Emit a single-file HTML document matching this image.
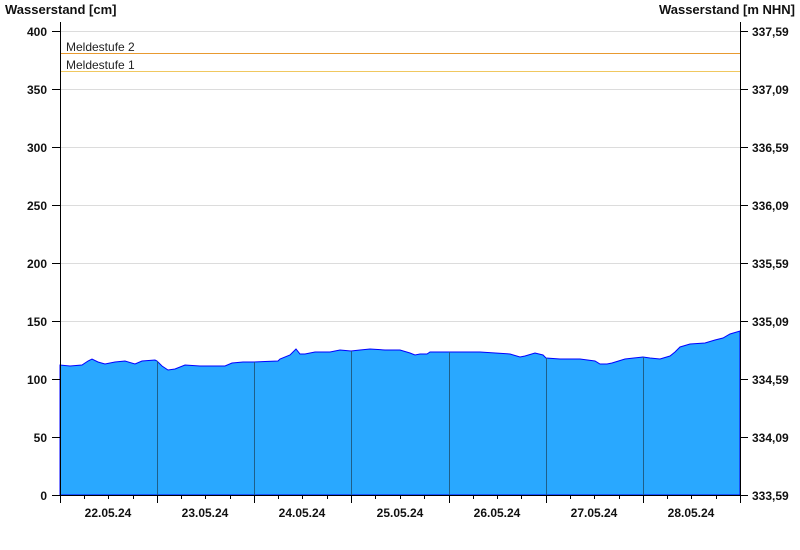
<!DOCTYPE html>
<html><head><meta charset="utf-8"><style>
html,body{margin:0;padding:0;background:#fff;}
svg{display:block;font-family:"Liberation Sans",Arial,sans-serif;}
.b{font-weight:bold;font-size:12px;fill:#111;}
</style></head><body>
<svg width="800" height="550" viewBox="0 0 800 550">
<text x="5" y="14" class="b" style="font-size:13px">Wasserstand [cm]</text>
<text x="795" y="14" class="b" style="font-size:13px" text-anchor="end">Wasserstand [m NHN]</text>
<g stroke="#dcdcdc" stroke-width="1">
<line x1="60" x2="740" y1="31.5" y2="31.5"/>
<line x1="60" x2="740" y1="89.5" y2="89.5"/>
<line x1="60" x2="740" y1="147.5" y2="147.5"/>
<line x1="60" x2="740" y1="205.5" y2="205.5"/>
<line x1="60" x2="740" y1="263.5" y2="263.5"/>
<line x1="60" x2="740" y1="321.5" y2="321.5"/>
<line x1="60" x2="740" y1="379.5" y2="379.5"/>
<line x1="60" x2="740" y1="437.5" y2="437.5"/>
</g>
<line x1="60" x2="740" y1="53.5" y2="53.5" stroke="#e89a30"/>
<line x1="60" x2="740" y1="71.5" y2="71.5" stroke="#f0c860"/>
<text x="66" y="51" font-size="12" fill="#222">Meldestufe 2</text>
<text x="66" y="69" font-size="12" fill="#222">Meldestufe 1</text>
<path fill="#29a8ff" stroke="#0000ff" stroke-width="1" d="M60,495 L60,365 L70,366 L82,365 L88,361 L92,359 L98,362 L105,364 L115,362 L125,361 L135,364 L142,361 L155,360 L157,361 L162,366 L168,370 L175,369 L185,365 L200,366 L225,366 L232,363 L243,362 L254,362 L265,361.5 L278,361 L280,359 L290,355 L296,349 L300,354 L305,354 L315,352 L330,352 L340,350 L351,351 L360,350 L370,349 L385,350 L400,350 L410,353 L415,355 L420,354 L427,354 L430,352 L440,352 L449,352 L480,352 L510,354 L520,357 L525,356 L535,353 L543,355 L546,358 L560,359 L580,359 L595,361 L600,364 L607,364 L612,363 L625,359 L643,357 L650,358 L660,359 L670,356 L675,352 L680,347 L690,344 L705,343 L715,340 L723,338 L730,334 L740,331 L740,495 Z"/>
<g stroke="#1e5f8a" stroke-width="1">
<line x1="157.5" x2="157.5" y1="361" y2="495"/>
<line x1="254.5" x2="254.5" y1="362" y2="495"/>
<line x1="351.5" x2="351.5" y1="351" y2="495"/>
<line x1="449.5" x2="449.5" y1="352" y2="495"/>
<line x1="546.5" x2="546.5" y1="358" y2="495"/>
<line x1="643.5" x2="643.5" y1="357" y2="495"/>
</g>
<g stroke="#000" stroke-width="1">
<line x1="60.5" x2="60.5" y1="22" y2="503"/>
<line x1="740.5" x2="740.5" y1="22" y2="495"/>
<line x1="52" x2="748" y1="495.5" y2="495.5"/>
<line x1="52" x2="60" y1="31.5" y2="31.5"/><line x1="52" x2="60" y1="89.5" y2="89.5"/>
<line x1="52" x2="60" y1="147.5" y2="147.5"/><line x1="52" x2="60" y1="205.5" y2="205.5"/>
<line x1="52" x2="60" y1="263.5" y2="263.5"/><line x1="52" x2="60" y1="321.5" y2="321.5"/>
<line x1="52" x2="60" y1="379.5" y2="379.5"/><line x1="52" x2="60" y1="437.5" y2="437.5"/>
<line x1="740" x2="748" y1="31.5" y2="31.5"/><line x1="740" x2="748" y1="89.5" y2="89.5"/>
<line x1="740" x2="748" y1="147.5" y2="147.5"/><line x1="740" x2="748" y1="205.5" y2="205.5"/>
<line x1="740" x2="748" y1="263.5" y2="263.5"/><line x1="740" x2="748" y1="321.5" y2="321.5"/>
<line x1="740" x2="748" y1="379.5" y2="379.5"/><line x1="740" x2="748" y1="437.5" y2="437.5"/>
<line x1="157.5" x2="157.5" y1="495" y2="503"/><line x1="254.5" x2="254.5" y1="495" y2="503"/>
<line x1="351.5" x2="351.5" y1="495" y2="503"/><line x1="449.5" x2="449.5" y1="495" y2="503"/>
<line x1="546.5" x2="546.5" y1="495" y2="503"/><line x1="643.5" x2="643.5" y1="495" y2="503"/>
<line x1="740.5" x2="740.5" y1="495" y2="503"/>
<line x1="84.5" x2="84.5" y1="495" y2="499"/><line x1="108.5" x2="108.5" y1="495" y2="499"/><line x1="133.5" x2="133.5" y1="495" y2="499"/>
<line x1="181.5" x2="181.5" y1="495" y2="499"/><line x1="205.5" x2="205.5" y1="495" y2="499"/><line x1="230.5" x2="230.5" y1="495" y2="499"/>
<line x1="278.5" x2="278.5" y1="495" y2="499"/><line x1="302.5" x2="302.5" y1="495" y2="499"/><line x1="327.5" x2="327.5" y1="495" y2="499"/>
<line x1="375.5" x2="375.5" y1="495" y2="499"/><line x1="400.5" x2="400.5" y1="495" y2="499"/><line x1="424.5" x2="424.5" y1="495" y2="499"/>
<line x1="473.5" x2="473.5" y1="495" y2="499"/><line x1="497.5" x2="497.5" y1="495" y2="499"/><line x1="521.5" x2="521.5" y1="495" y2="499"/>
<line x1="570.5" x2="570.5" y1="495" y2="499"/><line x1="594.5" x2="594.5" y1="495" y2="499"/><line x1="619.5" x2="619.5" y1="495" y2="499"/>
<line x1="667.5" x2="667.5" y1="495" y2="499"/><line x1="691.5" x2="691.5" y1="495" y2="499"/><line x1="716.5" x2="716.5" y1="495" y2="499"/>
</g>
<g class="b" text-anchor="end">
<text x="47" y="36">400</text><text x="47" y="94">350</text><text x="47" y="152">300</text>
<text x="47" y="210">250</text><text x="47" y="268">200</text><text x="47" y="326">150</text>
<text x="47" y="384">100</text><text x="47" y="442">50</text><text x="47" y="500">0</text>
</g>
<g class="b">
<text x="752" y="36">337,59</text><text x="752" y="94">337,09</text><text x="752" y="152">336,59</text>
<text x="752" y="210">336,09</text><text x="752" y="268">335,59</text><text x="752" y="326">335,09</text>
<text x="752" y="384">334,59</text><text x="752" y="442">334,09</text><text x="752" y="500">333,59</text>
</g>
<g class="b" text-anchor="middle">
<text x="108" y="517">22.05.24</text><text x="205" y="517">23.05.24</text><text x="302" y="517">24.05.24</text>
<text x="400" y="517">25.05.24</text><text x="497" y="517">26.05.24</text><text x="594" y="517">27.05.24</text>
<text x="691" y="517">28.05.24</text>
</g>
</svg>
</body></html>
